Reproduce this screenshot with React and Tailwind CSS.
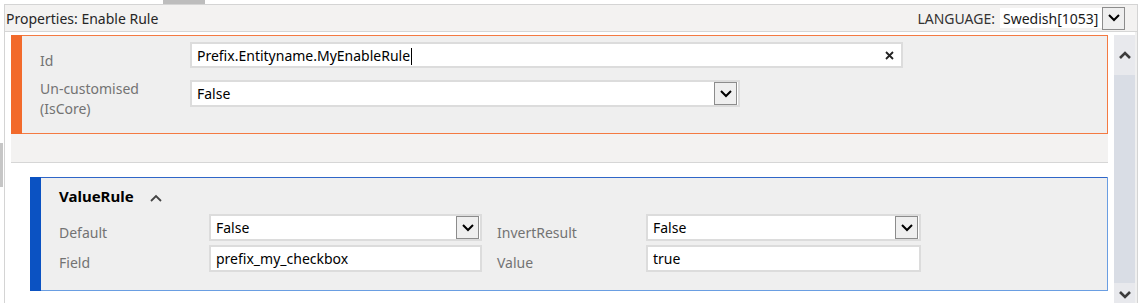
import React from 'react';

const font = { fontFamily: '"Segoe UI", "Noto Sans", sans-serif' };

// small chevron used by dropdown buttons and the scrollbar
function Chevron({ up = false, className = '', width = 2 }) {
  return (
    <svg width="12" height="8" viewBox="0 0 12 8" className={className}>
      <path
        d={up ? 'M1 7 L6 2 L11 7' : 'M1 1 L6 6 L11 1'}
        fill="none"
        stroke="currentColor"
        strokeWidth={width}
      />
    </svg>
  );
}

function DropButton() {
  return (
    <div className="flex items-center justify-center w-[23px] h-[23px] border border-[#8c8c8c] bg-[#efefef] text-black">
      <Chevron />
    </div>
  );
}

function Select({ value, className = '' }) {
  return (
    <div className={`flex items-center justify-between bg-white border-2 border-[#dcdcdc] pl-[5px] pr-[1px] ${className}`}>
      <span className="text-[14px] text-black">{value}</span>
      <DropButton />
    </div>
  );
}

function Input({ value, className = '' }) {
  return (
    <div className={`flex items-center bg-white border-2 border-[#dcdcdc] px-[5px] ${className}`}>
      <span className="text-[14px] text-black">{value}</span>
    </div>
  );
}

function Label({ children, className = '' }) {
  return <div className={`text-[14px] leading-[20px] text-[#737373] ${className}`}>{children}</div>;
}

export default function App() {
  return (
    <div className="w-[1145px] h-[303px] bg-white overflow-hidden flex" style={font}>
      {/* outer splitter strip */}
      <div className="w-[4px] shrink-0 pt-[143px]">
        <div className="w-[3px] h-[44px] bg-[#c6c6c6]" />
      </div>

      <div className="flex flex-col">
        {/* top strip with tab */}
        <div className="h-[4px] relative">
          <div className="absolute left-[159px] top-0 w-[42px] h-[4px] bg-[#bdbdbd]" />
        </div>

        <div className="w-[1134px] flex-1 border-t border-l border-r border-[#d4d4d4] flex flex-col">
          {/* header */}
          <div className="h-[27px] bg-[#f3f2f1] border-b border-[#d6d6d6] flex items-center justify-between pr-[12px]">
            <span className="text-[14px] text-[#262626] pl-[1px]">Properties: Enable Rule</span>
            <div className="flex items-center">
              <span className="text-[14px] text-[#333] mr-[5px]">LANGUAGE:</span>
              <div className="flex items-center">
                <div className="w-[102px] h-[20px] bg-white flex items-center pl-[3px]">
                  <span className="text-[14px] text-[#1a1a1a]">Swedish[1053]</span>
                </div>
                <DropButton />
              </div>
            </div>
          </div>

          <div className="flex flex-1">
            {/* content */}
            <div className="w-[1103px] shrink-0 flex flex-col pl-[6px] pt-[3px]">
              {/* orange panel: outer fill acts as the 1px frame */}
              <div className="h-[99px] flex bg-[#f47a42] p-px pl-0">
                <div className="w-[11px] bg-[#f26a2b] -my-px" />
                <div className="flex-1 flex flex-col bg-[#efefef] pt-[6px] pl-[18px] gap-[9px]">
                  <div className="flex">
                    <Label className="w-[150px] pt-[9px]">Id</Label>
                    <div className="w-[713px] h-[26px] flex items-center justify-between bg-white border-2 border-[#dcdcdc] pl-[5px] pr-[7px]">
                      <span className="text-[14px] text-black">
                        Prefix.Entityname.MyEnableRule
                        <span className="inline-block w-px h-[17px] bg-black align-middle ml-[1px]" />
                      </span>
                      <svg width="9" height="9" viewBox="0 0 9 9">
                        <path d="M1 1 L8 8 M8 1 L1 8" stroke="#222" strokeWidth="1.8" />
                      </svg>
                    </div>
                  </div>
                  <div className="flex">
                    <Label className="w-[150px] -mt-[1px]">
                      Un-customised
                      <br />
                      (IsCore)
                    </Label>
                    <Select value="False" className="w-[550px] h-[27px]" />
                  </div>
                </div>
              </div>

              {/* grey spacer */}
              <div className="h-[29px] bg-[#f3f2f1] border-b border-[#d6d6d6]" />

              {/* blue panel */}
              <div className="ml-[19px] mt-[14px] h-[114px] flex bg-[#6a9ee2] p-px pl-0">
                <div className="w-[11px] bg-[#0b52c2] -my-px" />
                <div className="flex-1 flex flex-col">
                  <div className="h-px bg-[#2f66c8] -mt-px" />
                  <div className="flex-1 flex flex-col bg-[#efefef] pl-[18px] pt-[6px]">
                    <div className="flex items-center h-[24px]">
                      <span className="text-[15px] font-bold text-black">ValueRule</span>
                      <Chevron up className="ml-[16px] text-[#444] mt-[3px]" width={1.8} />
                    </div>
                    <div className="flex mt-[6px] h-[27px]">
                      <Label className="w-[150px] pt-[9px]">Default</Label>
                      <Select value="False" className="w-[273px] h-[27px]" />
                      <Label className="w-[149px] pt-[9px] ml-[15px]">InvertResult</Label>
                      <Select value="False" className="w-[275px] h-[27px]" />
                    </div>
                    <div className="flex mt-[4px] h-[27px]">
                      <Label className="w-[150px] pt-[8px]">Field</Label>
                      <Input value="prefix_my_checkbox" className="w-[273px] h-[27px]" />
                      <Label className="w-[149px] pt-[8px] ml-[15px]">Value</Label>
                      <Input value="true" className="w-[275px] h-[27px]" />
                    </div>
                  </div>
                </div>
              </div>
            </div>

            {/* scrollbar */}
            <div className="w-[21px] shrink-0 ml-[6px] mt-[3px] bg-[#e8e9ed] flex flex-col text-[#3c3c3c]">
              <div className="h-[40px] flex items-center justify-center">
                <Chevron up width={2.6} />
              </div>
              <div className="flex-1 bg-[#d9dde5]" />
              <div className="h-[20px] flex items-center justify-center pt-[4px]">
                <Chevron width={2.6} />
              </div>
            </div>
            <div className="flex-1 bg-[#f0f0f0]" />
          </div>
        </div>
      </div>
    </div>
  );
}
